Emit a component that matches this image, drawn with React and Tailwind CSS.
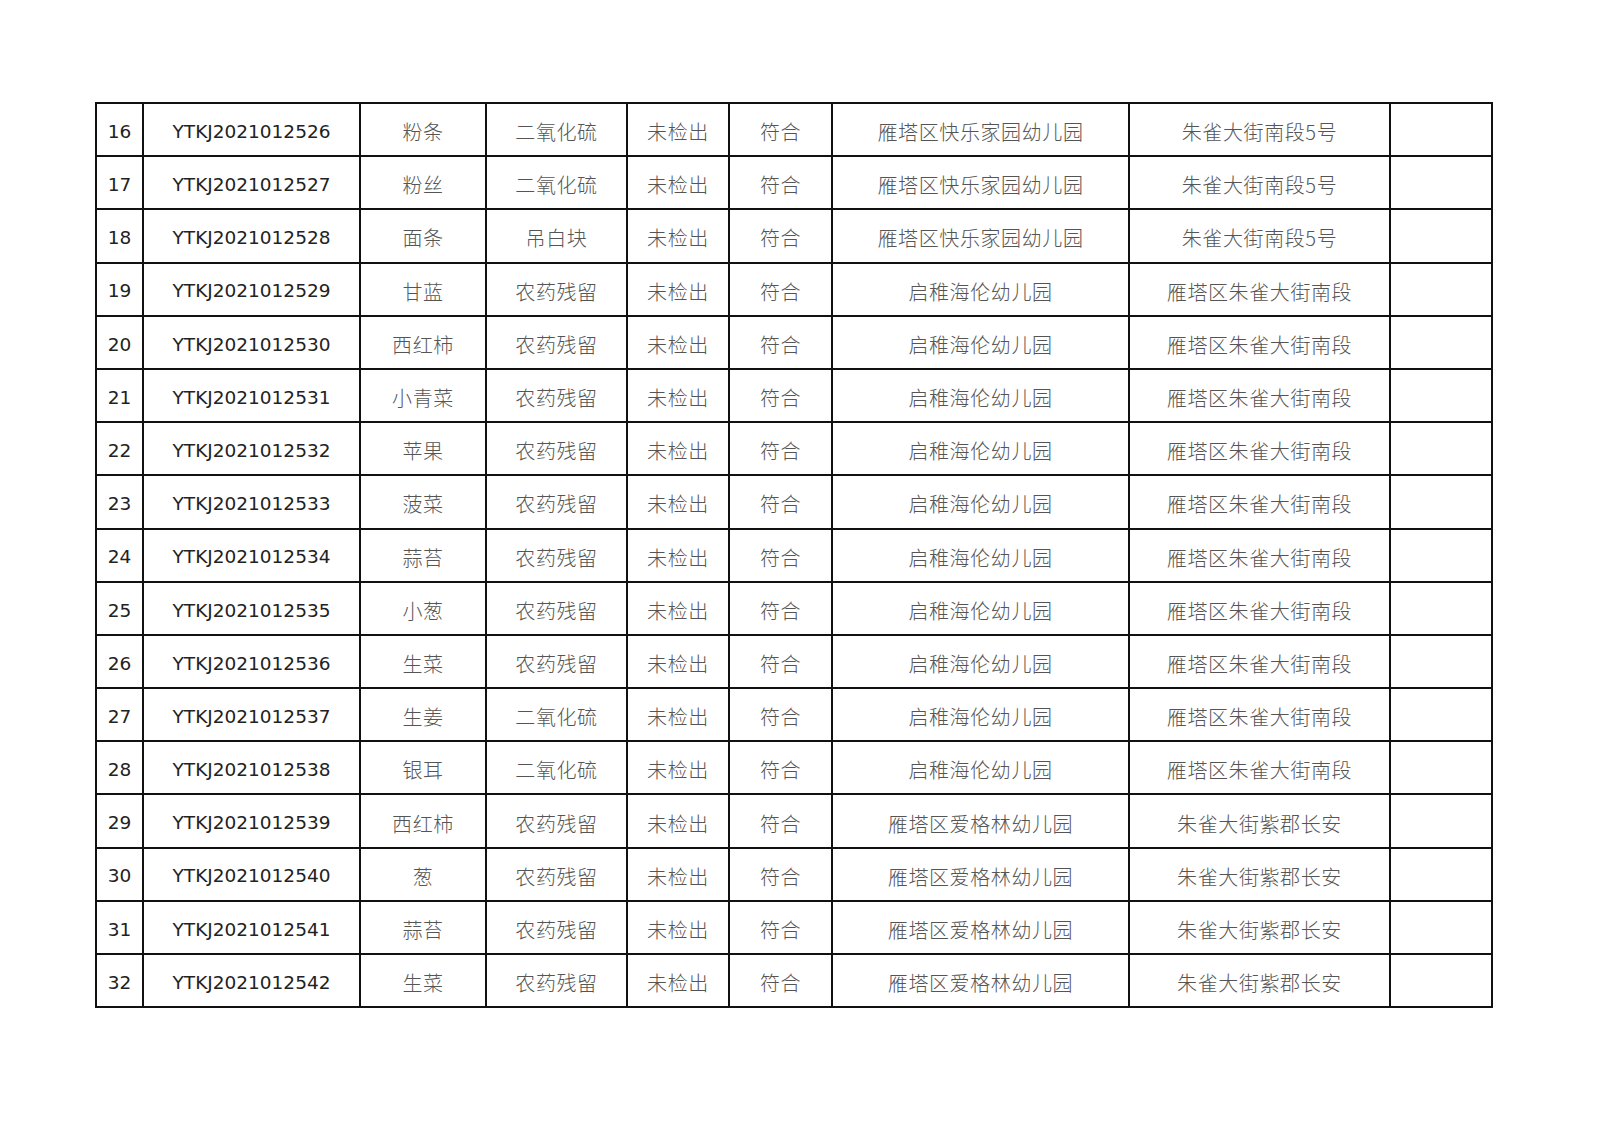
const rows = [
  [16, "粉条", "二氧化硫", "雁塔区快乐家园幼儿园", "朱雀大街南段5号"],
  [17, "粉丝", "二氧化硫", "雁塔区快乐家园幼儿园", "朱雀大街南段5号"],
  [18, "面条", "吊白块", "雁塔区快乐家园幼儿园", "朱雀大街南段5号"],
  [19, "甘蓝", "农药残留", "启稚海伦幼儿园", "雁塔区朱雀大街南段"],
  [20, "西红柿", "农药残留", "启稚海伦幼儿园", "雁塔区朱雀大街南段"],
  [21, "小青菜", "农药残留", "启稚海伦幼儿园", "雁塔区朱雀大街南段"],
  [22, "苹果", "农药残留", "启稚海伦幼儿园", "雁塔区朱雀大街南段"],
  [23, "菠菜", "农药残留", "启稚海伦幼儿园", "雁塔区朱雀大街南段"],
  [24, "蒜苔", "农药残留", "启稚海伦幼儿园", "雁塔区朱雀大街南段"],
  [25, "小葱", "农药残留", "启稚海伦幼儿园", "雁塔区朱雀大街南段"],
  [26, "生菜", "农药残留", "启稚海伦幼儿园", "雁塔区朱雀大街南段"],
  [27, "生姜", "二氧化硫", "启稚海伦幼儿园", "雁塔区朱雀大街南段"],
  [28, "银耳", "二氧化硫", "启稚海伦幼儿园", "雁塔区朱雀大街南段"],
  [29, "西红柿", "农药残留", "雁塔区爱格林幼儿园", "朱雀大街紫郡长安"],
  [30, "葱", "农药残留", "雁塔区爱格林幼儿园", "朱雀大街紫郡长安"],
  [31, "蒜苔", "农药残留", "雁塔区爱格林幼儿园", "朱雀大街紫郡长安"],
  [32, "生菜", "农药残留", "雁塔区爱格林幼儿园", "朱雀大街紫郡长安"],
];

const latin = "font-['DejaVu_Sans',Verdana,sans-serif] text-[18.5px] text-[#222]";
const cjk = "font-['Noto_Sans_CJK_SC',sans-serif] font-light text-[20px] tracking-[0.6px] text-[#555]";
const td = "border-2 border-[#111] text-center align-middle p-0 pt-[5px] h-[53.2px] leading-none";

export default function App() {
  return (
    <div className="w-[1600px] h-[1131px] bg-white overflow-hidden">
      <table className="ml-[95px] mt-[102px] border-collapse table-fixed w-[1396px]">
        <colgroup>
          <col className="w-[47px]" />
          <col className="w-[217px]" />
          <col className="w-[126px]" />
          <col className="w-[141px]" />
          <col className="w-[102px]" />
          <col className="w-[103px]" />
          <col className="w-[297px]" />
          <col className="w-[261px]" />
          <col className="w-[102px]" />
        </colgroup>
        <tbody>
          {rows.map((r) => (
            <tr key={r[0]}>
              <td className={`${td} ${latin}`}>{r[0]}</td>
              <td className={`${td} ${latin}`}>YTKJ20210125{r[0] + 10}</td>
              <td className={`${td} ${cjk}`}>{r[1]}</td>
              <td className={`${td} ${cjk}`}>{r[2]}</td>
              <td className={`${td} ${cjk}`}>未检出</td>
              <td className={`${td} ${cjk}`}>符合</td>
              <td className={`${td} ${cjk}`}>{r[3]}</td>
              <td className={`${td} ${cjk}`}>{r[4]}</td>
              <td className={td}></td>
            </tr>
          ))}
        </tbody>
      </table>
    </div>
  );
}
